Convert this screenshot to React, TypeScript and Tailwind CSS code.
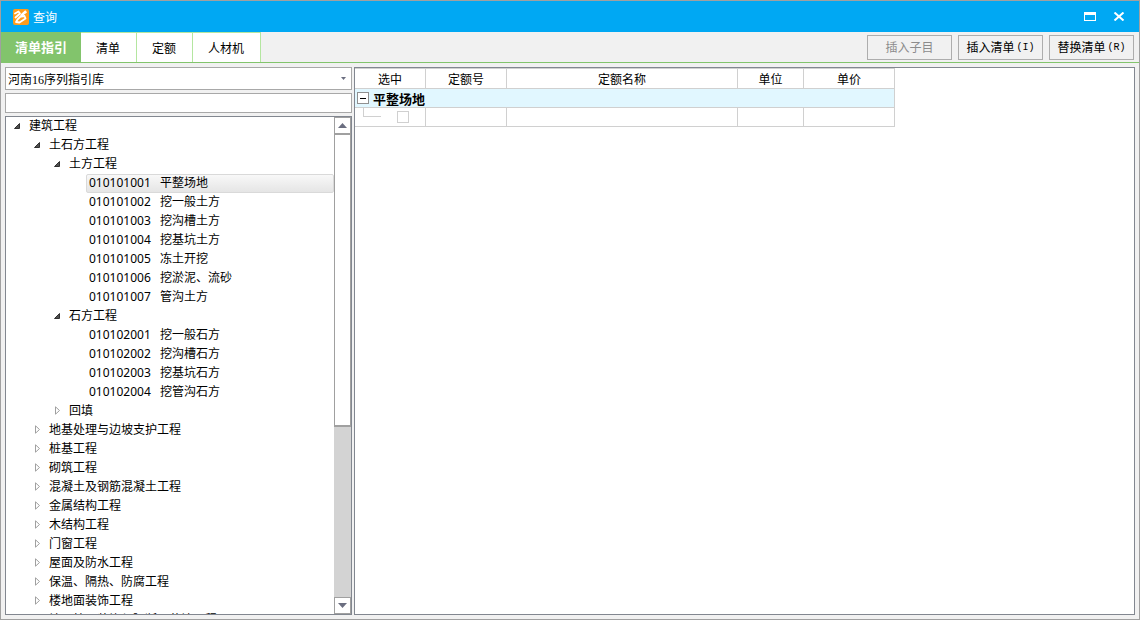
import { useState } from "react";

type TreeNode = {
  depth: 0 | 1 | 2 | 3;
  label: string;
  code?: string;
  open?: boolean;
};

const TREE: TreeNode[] = [
  { depth: 0, label: "建筑工程", open: true },
  { depth: 1, label: "土石方工程", open: true },
  { depth: 2, label: "土方工程", open: true },
  { depth: 3, code: "010101001", label: "平整场地" },
  { depth: 3, code: "010101002", label: "挖一般土方" },
  { depth: 3, code: "010101003", label: "挖沟槽土方" },
  { depth: 3, code: "010101004", label: "挖基坑土方" },
  { depth: 3, code: "010101005", label: "冻土开挖" },
  { depth: 3, code: "010101006", label: "挖淤泥、流砂" },
  { depth: 3, code: "010101007", label: "管沟土方" },
  { depth: 2, label: "石方工程", open: true },
  { depth: 3, code: "010102001", label: "挖一般石方" },
  { depth: 3, code: "010102002", label: "挖沟槽石方" },
  { depth: 3, code: "010102003", label: "挖基坑石方" },
  { depth: 3, code: "010102004", label: "挖管沟石方" },
  { depth: 2, label: "回填" },
  { depth: 1, label: "地基处理与边坡支护工程" },
  { depth: 1, label: "桩基工程" },
  { depth: 1, label: "砌筑工程" },
  { depth: 1, label: "混凝土及钢筋混凝土工程" },
  { depth: 1, label: "金属结构工程" },
  { depth: 1, label: "木结构工程" },
  { depth: 1, label: "门窗工程" },
  { depth: 1, label: "屋面及防水工程" },
  { depth: 1, label: "保温、隔热、防腐工程" },
  { depth: 1, label: "楼地面装饰工程" },
  { depth: 1, label: "墙、柱面装饰与隔断、幕墙工程" },
];

const INDENT = {
  0: "pl-0",
  1: "pl-5",
  2: "pl-10",
  3: "pl-20",
} as const;

const TABS = ["清单指引", "清单", "定额", "人材机"];

function Logo() {
  return (
    <svg width="16" height="16" viewBox="0 0 16 16" aria-hidden="true">
      <rect width="16" height="16" rx="2" fill="#ff9c1a" />
      <path
        d="M2 4.5 5.5 2.5 7 4.5 2.5 8.5M12.5 2.5 4.5 10.5 3 13l3.5.5 6-4-1-2.5-3 .5"
        fill="none"
        stroke="#fff"
        strokeWidth="1.8"
        strokeLinejoin="round"
        strokeLinecap="round"
      />
      <path d="M7.5 5.5 12 1.5 14 3.5 9 7z" fill="#fff" />
    </svg>
  );
}

function Twisty({ open }: { open?: boolean }) {
  return (
    <svg width="8" height="9" viewBox="0 0 8 9" className="shrink-0" aria-hidden="true">
      {open ? (
        <path d="M6.5 2.5v5H1.5z" fill="#505050" stroke="#303030" />
      ) : (
        <path d="M2.5.8v7.4l4-3.7z" fill="#fff" stroke="#a0a0a0" />
      )}
    </svg>
  );
}

function TreeRow({
  node,
  selected,
  onSelect,
}: {
  node: TreeNode;
  selected: boolean;
  onSelect: () => void;
}) {
  return (
    <li className={INDENT[node.depth]}>
      {node.code ? (
        <button
          type="button"
          onClick={onSelect}
          className={`flex h-[19px] w-full items-center gap-2 rounded-xs border pb-0.5 pl-0.5 text-left whitespace-nowrap ${
            selected
              ? "border-[#d9d9d9] bg-linear-to-b from-[#f8f8f8] to-[#e5e5e5]"
              : "border-transparent"
          }`}
        >
          <span className="w-[63px]">{node.code}</span>
          <span>{node.label}</span>
        </button>
      ) : (
        <button
          type="button"
          aria-expanded={!!node.open}
          className="flex h-[19px] w-full items-center gap-2 pb-0.5 pl-[7px] text-left whitespace-nowrap"
        >
          <Twisty open={node.open} />
          <span>{node.label}</span>
        </button>
      )}
    </li>
  );
}

function ScrollButton({ label, up }: { label: string; up?: boolean }) {
  return (
    <button
      type="button"
      aria-label={label}
      className="flex h-[17px] w-full shrink-0 items-center justify-center border border-[#a0a0a0] bg-white"
    >
      <svg width="9" height="5" viewBox="0 0 9 5" aria-hidden="true">
        <path d={up ? "M0 5h9L4.5 0z" : "M0 0h9L4.5 5z"} fill="#6b6e80" />
      </svg>
    </button>
  );
}

function ToolButton({
  label,
  hotkey,
  disabled,
}: {
  label: string;
  hotkey?: string;
  disabled?: boolean;
}) {
  return (
    <button
      type="button"
      disabled={disabled}
      className="flex h-[25px] w-[85px] items-center justify-center border border-[#adadad] bg-[#f1f1f1] pt-0.5 text-black disabled:text-[#8c8c8c]"
    >
      {label}
      {hotkey && (
        <span className="ml-0.5 font-['Liberation_Mono',monospace] text-[10px]">({hotkey})</span>
      )}
    </button>
  );
}

function QuotaTable() {
  const cell = "border-r border-b border-[#d0d0d0]";
  return (
    <table className="w-[540px] table-fixed border-separate border-spacing-0 border-t border-[#d0d0d0]">
      <colgroup>
        <col className="w-[71px]" />
        <col className="w-[81px]" />
        <col className="w-[231px]" />
        <col className="w-[66px]" />
        <col className="w-[91px]" />
      </colgroup>
      <thead>
        <tr className="h-5">
          {["选中", "定额号", "定额名称", "单位", "单价"].map((name) => (
            <th key={name} className={`${cell} pt-0.5 font-normal`}>
              {name}
            </th>
          ))}
        </tr>
      </thead>
      <tbody>
        <tr className="h-[19px] bg-[#e1f7ff]">
          <td colSpan={5} className={cell}>
            <div className="flex h-[18px] items-center gap-1 pl-0.5">
              <button
                type="button"
                aria-label="折叠"
                className="flex size-3 items-center justify-center border border-[#909090] bg-white"
              >
                <span className="h-px w-1.5 bg-black" />
              </button>
              <span className="pt-0.5 text-[13px] leading-4 font-bold">平整场地</span>
            </div>
          </td>
        </tr>
        <tr className="h-[19px]">
          <td className={cell}>
            <div className="flex h-[18px] items-center gap-4 pl-2">
              <span className="h-[9px] w-[18px] self-start border-b border-l border-[#d0d0d0]" />
              <input
                type="checkbox"
                aria-label="选中"
                className="size-3 appearance-none border border-[#d0d0d0] bg-white"
              />
            </div>
          </td>
          <td className={cell} />
          <td className={cell} />
          <td className={cell} />
          <td className={cell} />
        </tr>
      </tbody>
    </table>
  );
}

export default function App() {
  const [tab, setTab] = useState("清单指引");
  const [selected, setSelected] = useState("010101001");

  return (
    <div className="flex h-screen flex-col border border-[#a0a0a0] bg-[#f1f1f1] font-['Noto_Sans','Noto_Sans_CJK_SC',sans-serif] text-xs text-black">
      <header className="flex h-[31px] shrink-0 items-center bg-[#00a8f3] pr-3.5 pl-3 text-white">
        <Logo />
        <h1 className="ml-1 pt-0.5">查询</h1>
        <div className="ml-auto flex items-center gap-[17px]">
          <button type="button" aria-label="最大化">
            <svg width="12" height="9" viewBox="0 0 12 9" className="block" aria-hidden="true">
              <path d="M0 0h12v9H0zM1 3v5h10V3z" fill="#fff" fillRule="evenodd" />
            </svg>
          </button>
          <button type="button" aria-label="关闭">
            <svg width="12" height="9" viewBox="0 0 12 9" className="block" aria-hidden="true">
              <path d="M1.5.5l9 8M10.5.5l-9 8" stroke="#fff" strokeWidth="2" />
            </svg>
          </button>
        </div>
      </header>

      <div className="flex h-[31px] shrink-0 items-stretch border-b border-[#82c46c] pr-[5px]">
        <nav className="flex">
          {TABS.map((name) => (
            <button
              key={name}
              type="button"
              onClick={() => setTab(name)}
              className={
                tab === name
                  ? "bg-[#82c46c] pt-0.5 pr-3.5 pl-3.5 text-[13px] font-bold text-white"
                  : "border-t border-r border-[#b4e6a0] bg-white pt-0.5 pr-4 pl-[15px]"
              }
            >
              {name}
            </button>
          ))}
        </nav>
        <div className="ml-auto flex items-center gap-1.5">
          <ToolButton label="插入子目" disabled />
          <ToolButton label="插入清单" hotkey="I" />
          <ToolButton label="替换清单" hotkey="R" />
        </div>
      </div>

      <main className="flex min-h-0 flex-1 gap-0.5 p-1">
        <aside className="flex w-[347px] shrink-0 flex-col">
          <div className="grid items-center">
            <select
              aria-label="指引库"
              className="col-start-1 row-start-1 h-[23px] appearance-none border border-[#a8a8a8] bg-white pt-0.5 pl-0.5 font-['Liberation_Serif','Noto_Sans_CJK_SC',serif]"
            >
              <option>河南16序列指引库</option>
            </select>
            <svg
              width="5"
              height="3"
              viewBox="0 0 5 3"
              className="pointer-events-none col-start-1 row-start-1 mr-1.5 justify-self-end"
              aria-hidden="true"
            >
              <path d="M0 0h5L2.5 3z" fill="#6b6e80" />
            </svg>
          </div>
          <input
            type="text"
            aria-label="搜索"
            className="mt-[3px] h-5 border border-[#a8a8a8] bg-white px-1"
          />
          <div className="mt-[3px] flex min-h-0 flex-1 border border-[#828790] bg-white">
            <ul className="min-w-0 flex-1 overflow-hidden">
              {TREE.map((node) => (
                <TreeRow
                  key={node.code ?? node.label}
                  node={node}
                  selected={node.code === selected}
                  onSelect={() => setSelected(node.code ?? "")}
                />
              ))}
            </ul>
            <div className="flex w-[17px] shrink-0 flex-col bg-[#d3d3d3]">
              <ScrollButton label="向上滚动" up />
              <div className="h-[59%] border border-b-2 border-[#a0a0a0] bg-white" />
              <div className="flex-1" />
              <ScrollButton label="向下滚动" />
            </div>
          </div>
        </aside>
        <section className="min-w-0 flex-1 overflow-hidden border border-[#828790] bg-white">
          <QuotaTable />
        </section>
      </main>
    </div>
  );
}
